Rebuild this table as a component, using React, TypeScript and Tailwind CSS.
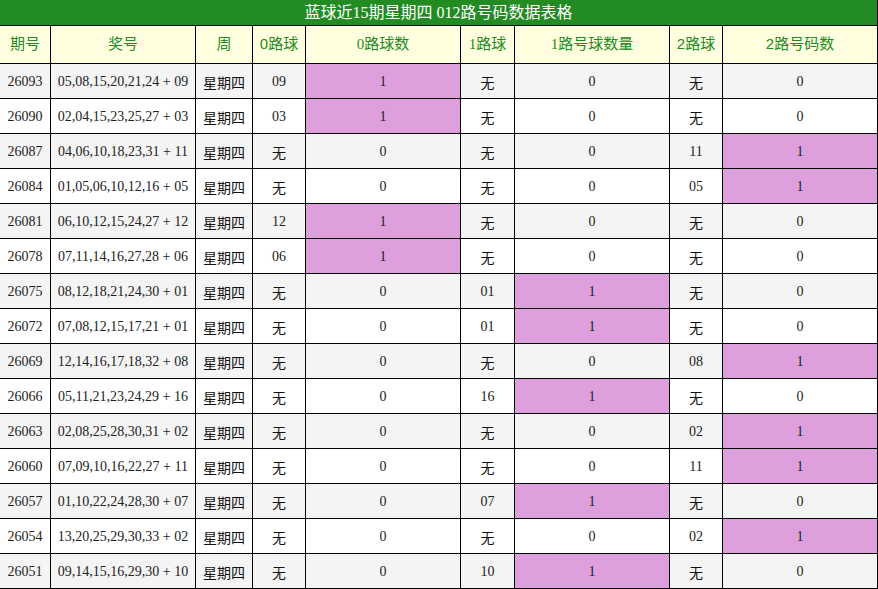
const rows: [string, string, string, string, string][] = [
  ['26093', '05,08,15,20,21,24 + 09', '09', '无', '无'],
  ['26090', '02,04,15,23,25,27 + 03', '03', '无', '无'],
  ['26087', '04,06,10,18,23,31 + 11', '无', '无', '11'],
  ['26084', '01,05,06,10,12,16 + 05', '无', '无', '05'],
  ['26081', '06,10,12,15,24,27 + 12', '12', '无', '无'],
  ['26078', '07,11,14,16,27,28 + 06', '06', '无', '无'],
  ['26075', '08,12,18,21,24,30 + 01', '无', '01', '无'],
  ['26072', '07,08,12,15,17,21 + 01', '无', '01', '无'],
  ['26069', '12,14,16,17,18,32 + 08', '无', '无', '08'],
  ['26066', '05,11,21,23,24,29 + 16', '无', '16', '无'],
  ['26063', '02,08,25,28,30,31 + 02', '无', '无', '02'],
  ['26060', '07,09,10,16,22,27 + 11', '无', '无', '11'],
  ['26057', '01,10,22,24,28,30 + 07', '无', '07', '无'],
  ['26054', '13,20,25,29,30,33 + 02', '无', '无', '02'],
  ['26051', '09,14,15,16,29,30 + 10', '无', '10', '无'],
]

const cols = 'grid grid-cols-[51px_145px_57px_53px_155px_54px_155px_53px_155px]'
const cell = 'flex items-center justify-center border-r border-b border-black'
const sans = "font-['Liberation_Sans','Noto_Sans_CJK_SC',sans-serif]"

// CJK cells sit a couple of px lower than the digits in the source
function Ball({ v }: { v: string }) {
  return <div className={`${cell} ${v === '无' ? 'pt-[4px] text-[#111]' : ''}`}>{v}</div>
}

function Count({ ball }: { ball: string }) {
  const hit = ball !== '无'
  return <div className={`${cell} ${hit ? 'bg-[#dda0dd]' : ''}`}>{hit ? '1' : '0'}</div>
}

export default function App() {
  return (
    <div
      className="w-[878px] text-[#222] text-[14px]"
      style={{ fontFamily: '"Liberation Serif", "Noto Sans CJK SC", serif' }}
    >
      <div className="h-[26px] bg-[#228b22] border-b border-black border-r flex items-center justify-center text-white text-[16px]">
        蓝球近15期星期四 012路号码数据表格
      </div>

      <div className={`${cols} h-[38px] bg-[#ffffe0] text-[#228b22] text-[15px]`}>
        <div className={cell}>期号</div>
        <div className={cell}>奖号</div>
        <div className={cell}>周</div>
        <div className={`${cell} ${sans}`}>0路球</div>
        <div className={cell}>0路球数</div>
        <div className={cell}>1路球</div>
        <div className={cell}>1路号球数量</div>
        <div className={`${cell} ${sans}`}>2路球</div>
        <div className={`${cell} ${sans}`}>2路号码数</div>
      </div>

      {rows.map(([no, nums, b0, b1, b2], i) => (
        <div key={no} className={`${cols} h-[35px] ${i % 2 === 0 ? 'bg-[#f4f4f4]' : 'bg-white'}`}>
          <div className={cell}>{no}</div>
          <div className={cell}>{nums}</div>
          <div className={`${cell} pt-[4px] text-[#111]`}>星期四</div>
          <Ball v={b0} />
          <Count ball={b0} />
          <Ball v={b1} />
          <Count ball={b1} />
          <Ball v={b2} />
          <Count ball={b2} />
        </div>
      ))}
    </div>
  )
}
